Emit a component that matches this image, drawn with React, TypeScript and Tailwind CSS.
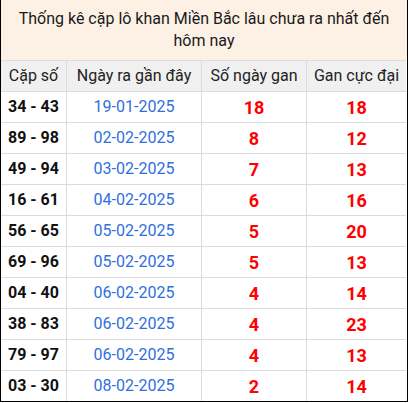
import React from "react";

const rows = [
  ["34 - 43", "19-01-2025", "18", "18"],
  ["89 - 98", "02-02-2025", "8", "12"],
  ["49 - 94", "03-02-2025", "7", "13"],
  ["16 - 61", "04-02-2025", "6", "16"],
  ["56 - 65", "05-02-2025", "5", "20"],
  ["69 - 96", "05-02-2025", "5", "13"],
  ["04 - 40", "06-02-2025", "4", "14"],
  ["38 - 83", "06-02-2025", "4", "23"],
  ["79 - 97", "06-02-2025", "4", "13"],
  ["03 - 30", "08-02-2025", "2", "14"],
];

const cell = "h-[31px] flex items-center justify-center border-t border-[#dcdcdc]";

export default function App() {
  return (
    <div className="w-[408px] bg-white font-['Roboto',sans-serif] text-[#222]">
      <div className="border-x border-b border-black">
        <div className="h-[60px] bg-[#fdf1e6] flex items-center justify-center text-center px-2 text-[16px] leading-[22px] text-[#1a1a1a]">
          Thống kê cặp lô khan Miền Bắc lâu chưa ra nhất đến hôm nay
        </div>
        <div className="grid grid-cols-[65px_135px_105px_100px]">
          <div className={`${cell} bg-[#f0f0f0] text-[16px]`}>Cặp số</div>
          <div className={`${cell} border-l bg-[#f0f0f0] text-[16px]`}>Ngày ra gần đây</div>
          <div className={`${cell} border-l bg-[#f0f0f0] text-[16px]`}>Số ngày gan</div>
          <div className={`${cell} border-l bg-[#f0f0f0] text-[16px]`}>Gan cực đại</div>
          {rows.map((r) => (
            <React.Fragment key={r[0] + r[1]}>
              <div className={`${cell} font-bold text-[16px] text-[#111]`}>{r[0]}</div>
              <div className={`${cell} border-l text-[16px] text-[#2f6fde]`}>{r[1]}</div>
              <div className={`${cell} border-l font-bold text-[18px] text-[#ff0000]`}>{r[2]}</div>
              <div className={`${cell} border-l font-bold text-[18px] text-[#ff0000]`}>{r[3]}</div>
            </React.Fragment>
          ))}
        </div>
      </div>
    </div>
  );
}
